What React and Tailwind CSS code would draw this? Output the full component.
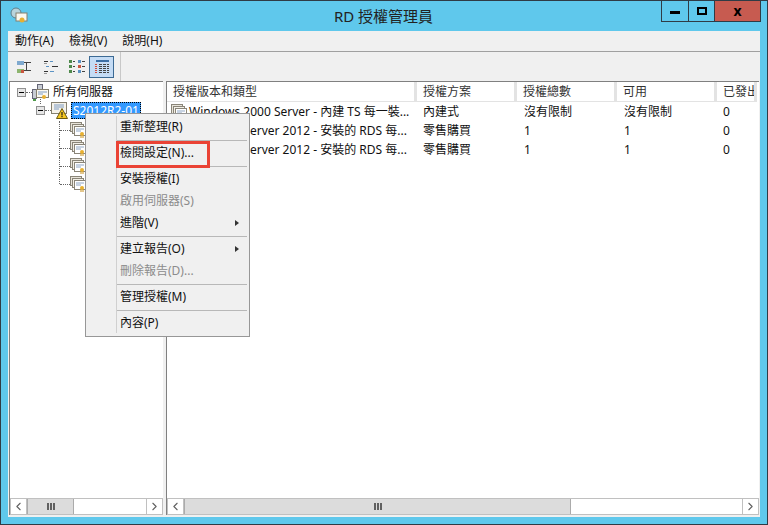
import { ChevronLeft, ChevronRight } from "lucide-react";

const columns = [
  { label: "授權版本和類型", w: "w-[250px]" },
  { label: "授權方案", w: "w-[100px]" },
  { label: "授權總數", w: "w-[100px]" },
  { label: "可用", w: "w-[100px]" },
  { label: "已發出", w: "w-[40px]" },
];

const rows = [
  ["Windows 2000 Server - 內建 TS 每一裝...", "內建式", "沒有限制", "沒有限制", "0"],
  ["Windows Server 2012 - 安裝的 RDS 每...", "零售購買", "1", "1", "0"],
  ["Windows Server 2012 - 安裝的 RDS 每...", "零售購買", "1", "1", "0"],
];

const menu = [
  { label: "重新整理(R)" },
  { sep: true },
  { label: "檢閱設定(N)..." },
  { sep: true },
  { label: "安裝授權(I)" },
  { label: "啟用伺服器(S)", off: true },
  { label: "進階(V)", arrow: true },
  { sep: true },
  { label: "建立報告(O)", arrow: true },
  { label: "刪除報告(D)...", off: true },
  { sep: true },
  { label: "管理授權(M)" },
  { sep: true },
  { label: "內容(P)" },
];

const CertStack = ({ className = "" }) => (
  <svg width="16" height="16" viewBox="0 0 16 16" className={`shrink-0 ${className}`}>
    <rect x="0.5" y="0.5" width="11" height="9" fill="#e8e4da" stroke="#8a8578" />
    <rect x="2.5" y="2.5" width="11" height="9" fill="#f2efe6" stroke="#8a8578" />
    <rect x="4.5" y="4.5" width="11" height="9" fill="#fff" stroke="#8a8578" />
    <path d="M6 7h8M6 9h5" stroke="#8fa6c4" />
    <circle cx="12" cy="12" r="2" fill="#e8b030" />
    <path d="M11 14v2M13 14v2" stroke="#c8901c" />
  </svg>
);

const ServerCert = () => (
  <svg width="17" height="17" viewBox="0 0 17 17" className="shrink-0">
    <rect x="0.5" y="0.5" width="15" height="11" fill="#f6f3ea" stroke="#85806f" />
    <path d="M3 3h10M3 5h10M3 7h5" stroke="#7f9cc4" />
    <path d="M11 6.5 L16.5 16.5 H5.5 Z" fill="#f6c823" stroke="#6b5a10" />
    <rect x="10.4" y="10" width="1.2" height="3.5" fill="#222" />
    <rect x="10.4" y="14" width="1.2" height="1.2" fill="#222" />
  </svg>
);

const AllServers = () => (
  <svg width="17" height="17" viewBox="0 0 17 17" className="shrink-0">
    <rect x="0.5" y="5.5" width="4" height="9" fill="#c7ccd3" stroke="#667" />
    <rect x="5.5" y="0.5" width="5" height="7" fill="#c7ccd3" stroke="#667" />
    <rect x="4.5" y="5.5" width="12" height="8" fill="#fbf8ef" stroke="#85806f" />
    <path d="M6 8h9M6 10h5" stroke="#7f9cc4" />
    <circle cx="12" cy="13" r="2" fill="#e8b030" />
    <rect x="1" y="15" width="3" height="2" fill="#4f9a4a" />
  </svg>
);

const Expander = () => (
  <span className="flex h-[9px] w-[9px] shrink-0 items-center justify-center border border-[#919191] bg-[#e6e6e6]">
    <span className="h-px w-[5px] bg-black" />
  </span>
);

const ToolIcon = ({ kind }) => (
  <svg width="16" height="16" viewBox="0 0 16 16">
    {kind === 0 && (
      <g>
        <rect x="0" y="2" width="7" height="4" fill="#7fa9cf" />
        <rect x="0" y="10" width="7" height="4" fill="#8db56f" />
        <rect x="4" y="11" width="3" height="3" fill="#c9563f" />
        <path d="M7 3.5h7M9.5 3.5v8M7 11.5h7" stroke="#444" />
      </g>
    )}
    {kind === 1 && (
      <g fill="none">
        <path d="M1 2.5h4M1 12.5h4M9 7.5h6" stroke="#333" />
        <path d="M7 2.5h3M7 12.5h4M3 7.5h3" stroke="#5b93c4" />
        <path d="M1 4.5h3M1 14.5h3" stroke="#999" />
      </g>
    )}
    {kind === 2 && (
      <g>
        {[1, 6, 11].map((y) => (
          <g key={y}>
            <rect x="0" y={y} width="3" height="3" fill="#4f8a4c" />
            <path d={`M4 ${y + 1.5}h2`} stroke="#444" />
            <rect x="9" y={y} width="3" height="3" fill={y === 6 ? "#c9563f" : "#5b93c4"} />
            <path d={`M13 ${y + 1.5}h3`} stroke="#444" />
          </g>
        ))}
      </g>
    )}
    {kind === 3 && (
      <g>
        <path d="M2 2h13" stroke="#3b6ea5" strokeWidth="2" />
        {[5, 7, 9, 11, 13].map((y) => (
          <g key={y}>
            <path d={`M1 ${y + 0.5}h2`} stroke="#d04a3a" />
            <path d={`M5 ${y + 0.5}h10`} stroke="#444" strokeDasharray="3 1" />
          </g>
        ))}
      </g>
    )}
  </svg>
);

const ScrollBtn = ({ dir }) => (
  <span className="flex h-full w-[17px] shrink-0 items-center justify-center border border-[#c0c0c0] bg-white text-[#606060]">
    {dir === "l" ? <ChevronLeft size={13} strokeWidth={2} /> : <ChevronRight size={13} strokeWidth={2} />}
  </span>
);

const ScrollBar = ({ thumb }) => (
  <div className="flex h-[17px] shrink-0 bg-white">
    <ScrollBtn dir="l" />
    <div className="flex-1 border-y border-[#c0c0c0]">
      <div className={`flex h-full items-center justify-center gap-px border-x border-[#ababab] bg-[#dcdcdc] ${thumb}`}>
        <span className="h-[7px] w-[2px] bg-[#606060]" />
        <span className="h-[7px] w-[2px] bg-[#606060]" />
        <span className="h-[7px] w-[2px] bg-[#606060]" />
      </div>
    </div>
    <ScrollBtn dir="r" />
  </div>
);

export default function App() {
  return (
    <div
      className="relative flex h-[525px] w-[768px] flex-col overflow-hidden border border-[#2f3b45] bg-[#5fc8ec] text-[12px] text-[#111]"
      style={{ fontFamily: '"Noto Sans", "Noto Sans CJK TC", sans-serif' }}
    >
      {/* title bar */}
      <div className="flex h-[30px] shrink-0 items-start">
        <div className="flex w-[105px] items-center pl-[9px] pt-[6px]">
          <svg width="18" height="18" viewBox="0 0 18 18">
            <circle cx="6" cy="6" r="5" fill="#b9d4dc" stroke="#5f7f8a" />
            <rect x="6" y="6" width="11" height="8" fill="#fbf8ef" stroke="#85806f" />
            <circle cx="12" cy="13" r="2.5" fill="#e8b030" />
          </svg>
        </div>
        <div className="flex-1 pt-[5px] text-center text-[15px] leading-[20px] text-[#222]">RD 授權管理員</div>
        <div className="mr-[6px] flex h-[21px] items-stretch border border-t-0 border-[#2f3b45]">
          <span className="flex w-[27px] items-center justify-center border-r border-[#2f3b45]">
            <span className="mt-[3px] h-[3px] w-[10px] bg-black" />
          </span>
          <span className="flex w-[26px] items-center justify-center border-r border-[#2f3b45]">
            <span className="h-[8px] w-[10px] border-2 border-black" />
          </span>
          <span className="flex w-[45px] items-center justify-center bg-[#c75b50] text-[14px] font-bold leading-none text-black">x</span>
        </div>
      </div>

      <div className="mx-[7px] mb-[7px] flex min-h-0 flex-1 flex-col bg-[#f0f0f0]">
        {/* menu bar */}
        <div className="flex h-[21px] shrink-0 items-center gap-[15px] border-b border-[#a0a0a0] pl-[7px] leading-[20px]">
          <span>動作(A)</span>
          <span>檢視(V)</span>
          <span>說明(H)</span>
        </div>
        {/* toolbar */}
        <div className="flex h-[29px] shrink-0 items-center pl-[9px]">
          <span className="w-[26px]"><ToolIcon kind={0} /></span>
          <span className="w-[26px]"><ToolIcon kind={1} /></span>
          <span className="w-[20px]"><ToolIcon kind={2} /></span>
          <span className="flex h-[22px] w-[25px] items-center justify-center border border-[#3c6a94] bg-[#c5dcf5]">
            <ToolIcon kind={3} />
          </span>
          <span className="ml-[6px] h-[29px] w-px bg-[#c8c8c8]" />
        </div>

        {/* panes */}
        <div className="flex min-h-0 flex-1 gap-[3px] bg-[#f0f0f0] pb-[2px] pl-px pr-px">
          <div className="flex w-[154px] shrink-0 flex-col border-l border-t border-[#808080] bg-white">
            <div className="relative min-h-0 flex-1 overflow-hidden">
              <div className="flex h-[19px] items-center pl-[7px] pt-[1px]">
                <Expander />
                <span className="w-[6px] border-t border-dotted border-[#666]" />
                <AllServers />
                <span className="ml-[4px]">所有伺服器</span>
              </div>
              <div className="flex h-[19px] items-center pl-[26px]">
                <Expander />
                <span className="w-[6px] border-t border-dotted border-[#666]" />
                <ServerCert />
                <span className="ml-[3px] border border-dotted border-black bg-[#3399ff] px-px leading-[15px] text-white">S2012R2-01</span>
              </div>
              {/* connector from root down to the server node */}
              <span className="absolute left-[30px] top-[17px] h-[5px] border-l border-dotted border-[#666]" />
              <div className="ml-[49px] pt-px">
                {[0, 1, 2, 3].map((i) => (
                  <div key={i} className="flex h-[18px] items-center">
                    <span className={`border-l border-dotted border-[#666] ${i === 3 ? "h-[9px] self-start" : "self-stretch"}`} />
                    <span className="w-[10px] border-t border-dotted border-[#666]" />
                    <CertStack />
                  </div>
                ))}
              </div>
            </div>
            <ScrollBar thumb="w-[47px]" />
          </div>

          <div className="flex min-w-0 flex-1 flex-col border-l border-t border-[#808080] bg-white">
            <div className="min-h-0 flex-1 overflow-hidden">
              <div className="flex h-[20px]">
                {columns.map((c) => (
                  <div key={c.label} className={`${c.w} shrink-0 overflow-hidden whitespace-nowrap border-b border-r-[3px] border-[#e3e3e3] pl-[6px] leading-[19px] text-[#333]`}>
                    {c.label}
                  </div>
                ))}
              </div>
              {rows.map((r, i) => (
                <div key={i} className="flex h-[19px] items-center">
                  <div className="flex w-[253px] shrink-0 items-center gap-[2px] pl-[4px]">
                    <CertStack />
                    <span className="whitespace-nowrap">{r[0]}</span>
                  </div>
                  <div className="w-[100px] shrink-0 pl-[3px]">{r[1]}</div>
                  <div className="w-[100px] shrink-0 pl-[4px]">{r[2]}</div>
                  <div className="w-[100px] shrink-0 pl-[4px]">{r[3]}</div>
                  <div className="w-[40px] shrink-0 pl-[3px]">{r[4]}</div>
                </div>
              ))}
            </div>
            <ScrollBar thumb="w-[387px]" />
          </div>
        </div>
      </div>

      {/* context menu */}
      <div className="absolute left-[84px] top-[112px] w-[165px] border border-[#979797] bg-[#f0f0f0] p-[2px]">
        <div className="absolute bottom-[3px] left-[30px] top-[2px] w-px bg-[#d0d0d0]" />
        {menu.map((m, i) =>
          m.sep ? (
            <div key={i} className="flex h-[4px] items-center pl-[28px]">
              <span className="h-px w-full bg-[#b8b8b8]" />
            </div>
          ) : (
            <div key={i} className={`relative flex h-[22px] items-center pl-[32px] ${m.off ? "text-[#8c8c8c]" : "text-[#111]"}`}>
              {m.label}
              {m.arrow && <span className="absolute right-[8px] top-[8px] h-0 w-0 border-y-[3.5px] border-l-[4px] border-y-transparent border-l-[#333]" />}
            </div>
          )
        )}
        <div className="absolute left-[30px] top-[27px] h-[27px] w-[94px] border-[3px] border-[#ea4335]" />
      </div>
    </div>
  );
}
